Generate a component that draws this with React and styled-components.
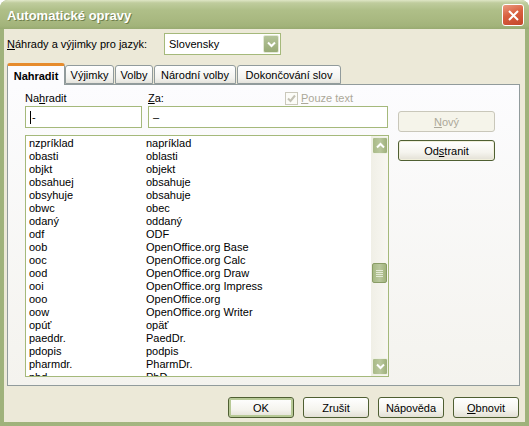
import React from "react";
import styled, { createGlobalStyle } from "styled-components";

const GlobalStyle = createGlobalStyle`
  html, body {
    margin: 0;
    padding: 0;
    background: #ffffff;
  }
  * {
    box-sizing: border-box;
  }
`;

// 슬로바키아어 자동 교정 목록
const rows = [
  ["nzpríklad", "napríklad"],
  ["obasti", "oblasti"],
  ["objkt", "objekt"],
  ["obsahuej", "obsahuje"],
  ["obsyhuje", "obsahuje"],
  ["obwc", "obec"],
  ["odaný", "oddaný"],
  ["odf", "ODF"],
  ["oob", "OpenOffice.org Base"],
  ["ooc", "OpenOffice.org Calc"],
  ["ood", "OpenOffice.org Draw"],
  ["ooi", "OpenOffice.org Impress"],
  ["ooo", "OpenOffice.org"],
  ["oow", "OpenOffice.org Writer"],
  ["opúť", "opäť"],
  ["paeddr.", "PaedDr."],
  ["pdopis", "podpis"],
  ["pharmdr.", "PharmDr."],
  ["phd", "PhD."],
];

const tabs = [
  { label: "Nahradit", w: 58, active: true },
  { label: "Výjimky", w: 49 },
  { label: "Volby", w: 38 },
  { label: "Národní volby", w: 82 },
  { label: "Dokončování slov", w: 104 },
];

const Chevron = ({ up }) => (
  <svg width="9" height="7" viewBox="0 0 9 7">
    <path
      d={up ? "M1 5.5 L4.5 2 L8 5.5" : "M1 1.5 L4.5 5 L8 1.5"}
      fill="none"
      stroke="#ffffff"
      strokeWidth="2"
    />
  </svg>
);

export default function App() {
  return (
    <>
      <GlobalStyle />
      <Window>
        {/* 제목 표시줄 */}
        <TitleBar>
          <TitleText>Automatické opravy</TitleText>
          <CloseBtn>
            <svg width="11" height="11" viewBox="0 0 11 11">
              <path d="M1 1 L10 10 M10 1 L1 10" stroke="#fff" strokeWidth="2" />
            </svg>
          </CloseBtn>
        </TitleBar>

        <Body>
          {/* 언어 선택 */}
          <LangRow>
            <Label>
              <u>N</u>áhrady a výjimky pro jazyk:
            </Label>
            <Select>
              <span>Slovensky</span>
              <DropBtn>
                <Chevron />
              </DropBtn>
            </Select>
          </LangRow>

          {/* 탭 */}
          <TabStrip>
            {tabs.map((t) => (
              <Tab key={t.label} active={t.active} w={t.w}>
                {t.label}
              </Tab>
            ))}
          </TabStrip>

          <Panel>
            <LeftArea>
              <Label>
                Na<u>h</u>radit
              </Label>
              <ZaHead>
                <Label>
                  <u>Z</u>a:
                </Label>
                <CheckWrap>
                  <CheckBox>
                    <svg width="9" height="9" viewBox="0 0 9 9">
                      <path
                        d="M1 4.5 L3.5 7 L8 1.5"
                        fill="none"
                        stroke="#c3c1b4"
                        strokeWidth="2"
                      />
                    </svg>
                  </CheckBox>
                  <Disabled>
                    <u>P</u>ouze text
                  </Disabled>
                </CheckWrap>
              </ZaHead>
              <TextField>
                <Caret />-
              </TextField>
              <TextField>–</TextField>

              <ListBox>
                <ListRows>
                  {rows.map(([a, b]) => (
                    <ListRow key={a}>
                      <Cell>{a}</Cell>
                      <Cell>{b}</Cell>
                    </ListRow>
                  ))}
                </ListRows>
                <ScrollBar>
                  <ScrollBtn>
                    <Chevron up />
                  </ScrollBtn>
                  <Track>
                    <Thumb>
                      <Grip />
                      <Grip />
                      <Grip />
                      <Grip />
                    </Thumb>
                  </Track>
                  <ScrollBtn>
                    <Chevron />
                  </ScrollBtn>
                </ScrollBar>
              </ListBox>
            </LeftArea>

            <SideButtons>
              <Button disabled>
                <u>N</u>ový
              </Button>
              <Button focus>
                Od<u>s</u>tranit
              </Button>
            </SideButtons>
          </Panel>

          {/* 하단 버튼 */}
          <Footer>
            <Button def w={66}>
              OK
            </Button>
            <Button w={66}>Zrušit</Button>
            <Button w={66}>Nápověda</Button>
            <Button w={66}>
              <u>O</u>bnovit
            </Button>
          </Footer>
        </Body>
      </Window>
    </>
  );
}

const Window = styled.div`
  width: 529px;
  height: 426px;
  display: flex;
  flex-direction: column;
  border-radius: 8px 8px 0 0;
  overflow: hidden;
  background: linear-gradient(90deg, #9fb27b, #a8b986 50%, #9fb27b);
  font-family: "Liberation Sans", Arial, sans-serif;
  font-size: 11px;
  color: #000;
`;

const TitleBar = styled.div`
  height: 29px;
  flex-shrink: 0;
  display: flex;
  align-items: center;
  justify-content: space-between;
  padding: 1px 5px 0 7px;
  background: linear-gradient(
    180deg,
    #dfe6c6 0%,
    #bfcc9d 10%,
    #afbf88 35%,
    #a8b880 70%,
    #a2b37a 90%,
    #98aa71 100%
  );
`;

const TitleText = styled.span`
  font-family: "Liberation Sans", Arial, sans-serif;
  font-weight: bold;
  font-size: 13px;
  color: #ffffff;
  text-shadow: 1px 1px 0 #6f7f4c;
`;

const CloseBtn = styled.div`
  width: 22px;
  height: 22px;
  border: 1px solid #ffffff;
  border-radius: 3px;
  display: flex;
  align-items: center;
  justify-content: center;
  background: linear-gradient(160deg, #eb9a80 0%, #d9603f 45%, #c4462a 100%);
`;

const Body = styled.div`
  flex: 1;
  margin: 0 4px 4px 4px;
  background: #ece9d8;
  padding: 4px 5px 0 3px;
  display: flex;
  flex-direction: column;
`;

const LangRow = styled.div`
  display: flex;
  align-items: center;
  height: 22px;
  gap: 16px;
`;

const Label = styled.span`
  line-height: 13px;
  white-space: nowrap;
`;

const Select = styled.div`
  width: 117px;
  height: 22px;
  margin-left: 1px;
  background: #fff;
  border: 1px solid #a5b97b;
  display: flex;
  align-items: center;
  justify-content: space-between;
  padding: 0 1px 0 4px;
`;

const DropBtn = styled.div`
  width: 16px;
  height: 18px;
  border-radius: 2px;
  border: 1px solid #e4e9d6;
  background: linear-gradient(180deg, #b5c49a, #98aa76);
  display: flex;
  align-items: center;
  justify-content: center;
`;

const TabStrip = styled.div`
  display: flex;
  align-items: flex-end;
  height: 22px;
  margin-top: 7px;
  position: relative;
  z-index: 1;
`;

const Tab = styled.div`
  width: ${(p) => p.w}px;
  height: ${(p) => (p.active ? 22 : 19)}px;
  margin-right: ${(p) => (p.active ? 0 : 1)}px;
  margin-bottom: ${(p) => (p.active ? -1 : 0)}px;
  display: flex;
  align-items: center;
  justify-content: center;
  font-weight: ${(p) => (p.active ? "bold" : "normal")};
  border: 1px solid #919b9c;
  border-bottom: ${(p) => (p.active ? "none" : "1px solid #919b9c")};
  border-top: ${(p) => (p.active ? "3px solid #e68b2c" : "1px solid #919b9c")};
  border-radius: 3px 3px 0 0;
  background: ${(p) =>
    p.active
      ? "#fcfcfe"
      : "linear-gradient(180deg, #ffffff, #f3f3ef 70%, #e4e3dc)"};
  padding-top: ${(p) => (p.active ? 0 : 1)}px;
`;

const Panel = styled.div`
  height: 302px;
  border: 1px solid #919b9c;
  background: linear-gradient(180deg, #fcfcfe, #f4f3ee);
  display: flex;
  padding: 7px 0 0 17px;
`;

const LeftArea = styled.div`
  width: 364px;
  display: grid;
  grid-template-columns: 117px 240px;
  column-gap: 6px;
  grid-template-rows: 13px 22px auto;
  row-gap: 1px;
  align-content: start;
`;

const ZaHead = styled.div`
  display: flex;
  justify-content: space-between;
  align-items: center;
  padding-right: 35px;
`;

const CheckWrap = styled.div`
  display: flex;
  align-items: center;
  gap: 3px;
`;

const CheckBox = styled.div`
  width: 13px;
  height: 13px;
  border: 1px solid #cac8bb;
  background: #fcfcf8;
  display: flex;
  align-items: center;
  justify-content: center;
`;

const Disabled = styled.span`
  color: #aca899;
  line-height: 13px;
`;

const TextField = styled.div`
  height: 22px;
  background: #fff;
  border: 1px solid #a5b97b;
  display: flex;
  align-items: center;
  padding-left: 4px;
  font-size: 11px;
`;

const Caret = styled.span`
  display: inline-block;
  width: 1px;
  height: 13px;
  background: #000;
  margin-right: 1px;
`;

const ListBox = styled.div`
  grid-column: 1 / 3;
  margin-top: 6px;
  width: 364px;
  height: 242px;
  background: #fff;
  border: 1px solid #a5b97b;
  display: flex;
  overflow: hidden;
`;

const ListRows = styled.div`
  flex: 1;
  padding: 1px 0 0 3px;
  overflow: hidden;
`;

const ListRow = styled.div`
  display: flex;
  height: 13px;
  line-height: 13px;
`;

const Cell = styled.span`
  width: 117px;
  white-space: nowrap;
`;

const ScrollBar = styled.div`
  width: 17px;
  display: flex;
  flex-direction: column;
  background: linear-gradient(90deg, #f0efe6, #f8f7f2);
  padding: 1px 0;
`;

const ScrollBtn = styled.div`
  width: 16px;
  height: 17px;
  margin-left: 1px;
  border-radius: 2px;
  border: 1px solid #eef1e4;
  background: linear-gradient(90deg, #a9ba87, #b9c79d 50%, #9eb07a);
  display: flex;
  align-items: center;
  justify-content: center;
`;

const Track = styled.div`
  flex: 1;
  padding-top: 109px;
`;

const Thumb = styled.div`
  width: 15px;
  height: 20px;
  margin-left: 1px;
  border-radius: 2px;
  border: 1px solid #8a9d66;
  background: linear-gradient(90deg, #a7b984, #bac89e 50%, #a1b37c);
  display: flex;
  flex-direction: column;
  align-items: center;
  justify-content: center;
  gap: 1px;
`;

const Grip = styled.div`
  width: 7px;
  height: 1px;
  background: #e4ead6;
`;

const SideButtons = styled.div`
  display: flex;
  flex-direction: column;
  gap: 8px;
  margin: 19px 0 0 9px;
`;

const Button = styled.div`
  width: ${(p) => (p.w ? p.w : 97)}px;
  height: 21px;
  display: flex;
  align-items: center;
  justify-content: center;
  border-radius: 3px;
  border: 1px solid ${(p) => (p.disabled ? "#c9c7ba" : "#4f5f32")};
  color: ${(p) => (p.disabled ? "#aca899" : "#000")};
  background: ${(p) =>
    p.disabled
      ? "#f5f4ea"
      : "linear-gradient(180deg, #ffffff, #f5f4ee 60%, #e3e0d5)"};
  box-shadow: ${(p) =>
    p.def
      ? "inset 0 0 0 2px #b7c996"
      : p.focus
      ? "inset 0 0 0 1px #f1efdc"
      : "none"};
`;

const Footer = styled.div`
  display: flex;
  justify-content: flex-end;
  gap: 9px;
  margin-top: 11px;
  padding-right: 1px;
`;
